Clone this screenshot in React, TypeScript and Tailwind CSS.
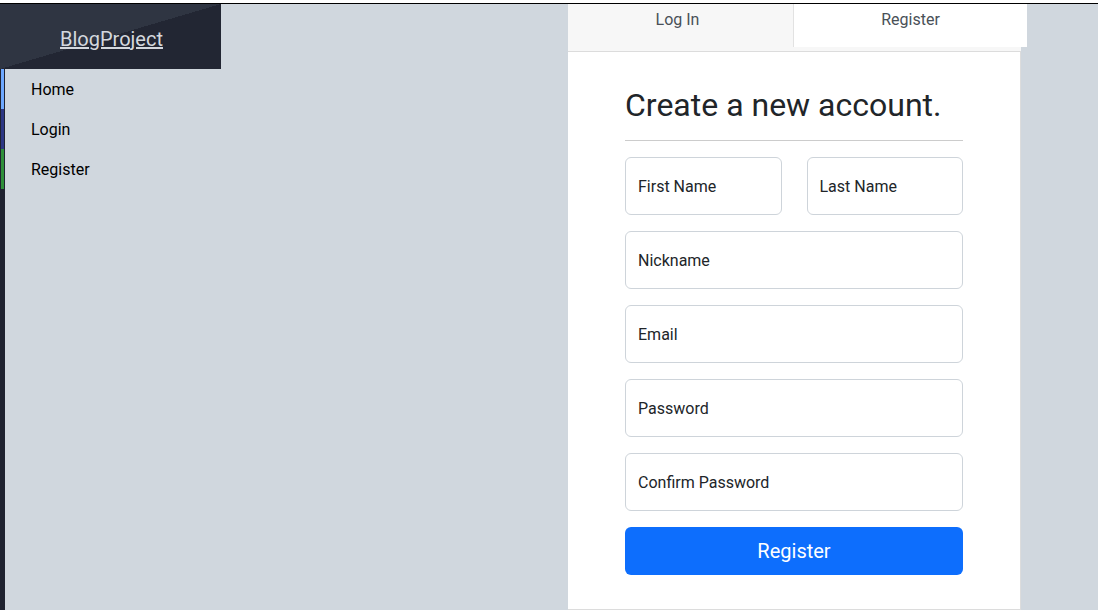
import React from 'react';

const navItems = [
  { label: 'Home', bar: 'bg-[#6ea8fe]' },
  { label: 'Login', bar: 'bg-[#2c3784]' },
  { label: 'Register', bar: 'bg-[#2f8f3a]' },
];

function Field({ placeholder, type = 'text' }: { placeholder: string; type?: string }) {
  return (
    <input
      type={type}
      placeholder={placeholder}
      className="h-[58px] w-full rounded-[6px] border border-[#ced4da] bg-white px-3 text-[16px] text-[#212529] outline-none placeholder:text-[#212529]"
    />
  );
}

export default function App() {
  return (
    <div className="flex min-h-screen flex-col bg-[#d0d7de] font-['Roboto',sans-serif]">
      <div className="h-[3px] bg-white" />
      <div className="h-px bg-black" />
      <div className="flex flex-1">
        <aside className="flex w-[221px] flex-col">
          <div className="flex h-[65px] items-center justify-center bg-[linear-gradient(to_bottom_right,#2f3542_50%,#222633_50%)] pl-[2px] pt-1">
            <a href="#" className="text-[20px] text-[#d4d8de] underline">
              BlogProject
            </a>
          </div>
          <div className="flex flex-1">
            <div className="flex w-[5px] flex-col bg-[#1f2230] pl-px">
              {navItems.map((item) => (
                <div key={item.label} className={`h-10 w-[3px] ${item.bar}`} />
              ))}
            </div>
            <nav className="flex flex-col">
              {navItems.map((item) => (
                <a key={item.label} href="#" className="flex h-10 items-center pl-[26px] pt-[2px] text-[16px] text-black">
                  {item.label}
                </a>
              ))}
            </nav>
          </div>
        </aside>
        <div className="flex-1" />
        <section className="mr-[71px] flex w-[459px] flex-col">
          <div className="flex h-[43px]">
            <div className="w-[226px] border-r border-[#e2e2e2] bg-[#f7f7f7] pr-[6px] pt-[4px] text-center text-[16px] leading-6 text-[#495057]">
              Log In
            </div>
            <div className="flex-1 bg-white pt-[4px] text-center text-[16px] leading-6 text-[#495057]">
              Register
            </div>
          </div>
          <div className="flex w-[453px] flex-1 flex-col">
            <div className="h-[4px] bg-[#f7f7f7]" />
            <div className="flex-1 border-t border-b border-r border-[#dcdcdc] bg-white pl-[57px] pr-[57px] pt-[34px]">
              <h2 className="text-[32px] leading-[38px] text-[#212529]">Create a new account.</h2>
              <hr className="mt-4 border-t border-[#cccccc]" />
              <form className="mt-4 flex flex-col gap-4">
                <div className="flex gap-[25px]">
                  <Field placeholder="First Name" />
                  <Field placeholder="Last Name" />
                </div>
                <Field placeholder="Nickname" />
                <Field placeholder="Email" type="email" />
                <Field placeholder="Password" type="password" />
                <Field placeholder="Confirm Password" type="password" />
                <button
                  type="button"
                  className="h-12 w-full rounded-[6px] bg-[#0d6efd] text-[20px] text-white"
                >
                  Register
                </button>
              </form>
            </div>
          </div>
        </section>
      </div>
    </div>
  );
}
